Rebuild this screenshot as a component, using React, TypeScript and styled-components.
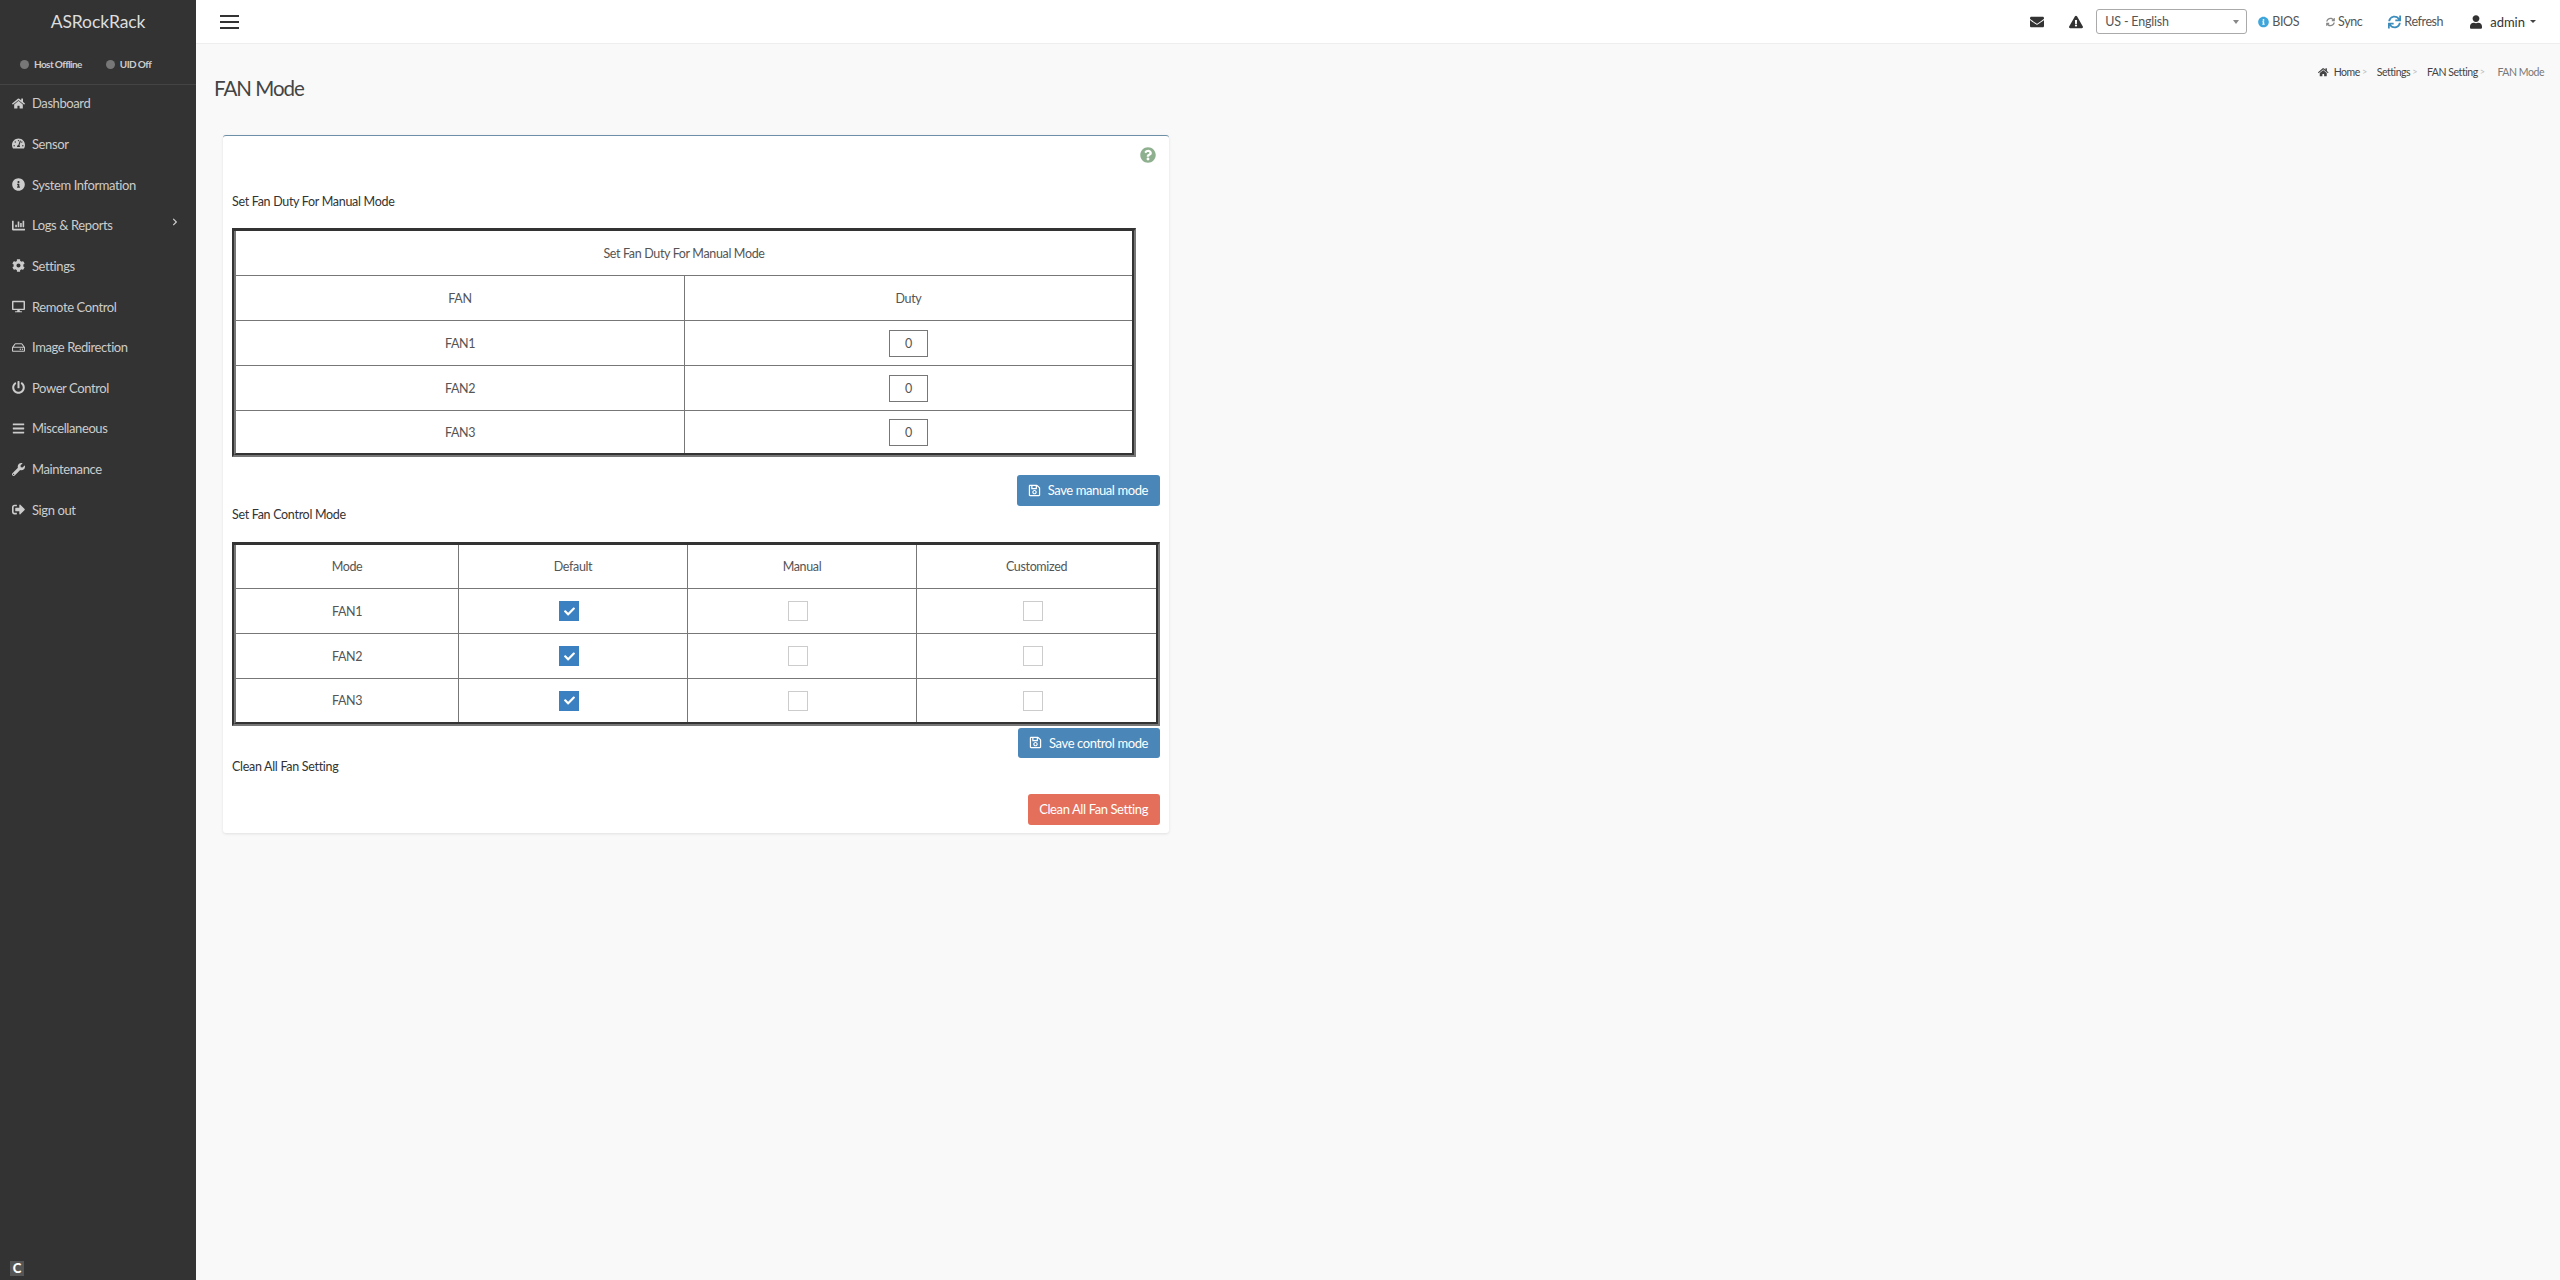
import React from "react";
import styled, { createGlobalStyle } from "styled-components";
import {
  FaHome, FaTachometerAlt, FaInfoCircle, FaChartBar, FaCog, FaDesktop, FaRegHdd, FaPowerOff,
  FaBars, FaWrench, FaSignOutAlt, FaChevronRight, FaEnvelope, FaExclamationTriangle, FaSyncAlt,
  FaSync, FaUser, FaQuestionCircle, FaRegSave, FaCheck,
} from "react-icons/fa";

const Global = createGlobalStyle`
  html, body { margin: 0; padding: 0; background: #f9f9f9; }
  body { font-family: "Lato", "Liberation Sans", sans-serif; font-size: 13px; color: #444; overflow: hidden; }
  * { box-sizing: border-box; }
`;

const Shell = styled.div`
  display: flex;
  width: 2560px;
  height: 1280px;
`;

const Sidebar = styled.aside`
  display: flex;
  flex-direction: column;
  width: 196px;
  flex: none;
  background: #333;
  color: #ccc;
`;

const Logo = styled.div`
  height: 44px;
  line-height: 44px;
  text-align: center;
  font-size: 17.5px;
  letter-spacing: -0.1px;
  color: #ddd;
`;

const StatusRow = styled.div`
  display: flex;
  align-items: center;
  height: 41px;
  padding: 0 0 0 20px;
  border-bottom: 1px solid #444;
  font-size: 10px;
  font-weight: 700;
  letter-spacing: -0.6px;
`;

const Status = styled.div<{ $gap: number }>`
  display: flex;
  align-items: center;
  gap: 5px;
  margin-right: ${(p) => p.$gap}px;
`;

const Dot = styled.span`
  width: 9px;
  height: 9px;
  border-radius: 50%;
  background: #777;
`;

const Nav = styled.nav`
  display: flex;
  flex-direction: column;
`;

const NavItem = styled.a`
  display: flex;
  align-items: center;
  height: 40.65px;
  padding: 0 0 4px 11px;
  font-size: 13px;
  letter-spacing: -0.4px;
  color: #ccc;
  position: relative;
`;

const NavIcon = styled.span`
  display: flex;
  justify-content: center;
  width: 14px;
  margin-right: 7px;
  font-size: 13px;
`;

const Chevron = styled.span`
  position: absolute;
  left: 171px;
  top: 11px;
  font-size: 8px;
`;

const Copy = styled.div`
  margin: auto 0 4px 10px;
  width: 14px;
  height: 15px;
  background: #555;
  color: #fff;
  font-size: 13px;
  font-weight: 900;
  line-height: 15px;
  text-align: center;
`;

const Main = styled.main`
  flex: 1;
  display: flex;
  flex-direction: column;
`;

const Topbar = styled.header`
  display: flex;
  align-items: center;
  height: 44px;
  padding-left: 24px;
  background: #fff;
  border-bottom: 1px solid #eee;
`;

const Burger = styled.div`
  display: flex;
  flex-direction: column;
  gap: 4px;
  width: 19px;
  margin-right: auto;
  span { display: block; height: 2px; background: #333; }
`;

const TopIcon = styled.span<{ $w: number; $color?: string; $ml?: number }>`
  display: flex;
  justify-content: center;
  width: ${(p) => p.$w}px;
  margin-left: ${(p) => p.$ml || 0}px;
  color: ${(p) => p.$color || "#333"};
  font-size: 14px;
`;

const TopLink = styled.a<{ $ml: number }>`
  display: flex;
  align-items: center;
  gap: 3px;
  margin-left: ${(p) => p.$ml}px;
  color: #555;
  font-size: 12.5px;
  letter-spacing: -0.4px;
`;

const LangBox = styled.div`
  position: relative;
  width: 151px;
  height: 25px;
  margin-left: 13px;
`;

const LangSelect = styled.select`
  appearance: none;
  width: 100%;
  height: 100%;
  padding: 0 0 0 8px;
  background: #fff;
  border: 1px solid #aaa;
  border-radius: 3px;
  font: 12.5px "Lato", sans-serif;
  letter-spacing: -0.2px;
  color: #555;
`;

const Caret = styled.span`
  position: absolute;
  right: 8px;
  top: 11px;
  border-top: 4px solid #888;
  border-left: 3px solid transparent;
  border-right: 3px solid transparent;
`;

const UserCaret = styled.span`
  margin-left: -3px;
  border-top: 3px solid #444;
  border-left: 3px solid transparent;
  border-right: 3px solid transparent;
`;

const Admin = styled(TopLink)`
  margin-right: 24px;
  gap: 8px;
  color: #333;
  font-size: 13px;
  letter-spacing: 0;
`;

const Header = styled.div`
  display: flex;
  justify-content: space-between;
  align-items: flex-start;
  height: 91px;
  padding: 0 16px 0 18px;
`;

const Title = styled.h1`
  margin: 30px 0 0;
  font-size: 20.5px;
  line-height: 28px;
  font-weight: 400;
  letter-spacing: -1px;
  color: #444;
`;

const Crumbs = styled.ol`
  display: flex;
  align-items: center;
  margin: 20px 0 0;
  padding: 0;
  list-style: none;
  font-size: 10.5px;
  letter-spacing: -0.45px;
  line-height: 16px;
  color: #444;
`;

const Crumb = styled.li<{ $dim?: boolean }>`
  display: flex;
  align-items: center;
  gap: 5px;
  color: ${(p) => (p.$dim ? "#777" : "#444")};
  &:not(:first-child)::before {
    content: ">";
    margin: 0 ${(p) => (p.$dim ? 8 : 5)}px 0 2px;
    color: #bbb;
    font-size: 9px;
  }
`;

const Card = styled.section`
  width: 946px;
  height: 698px;
  margin-left: 27px;
  padding: 11px 9px 8px;
  background: #fff;
  border-top: 1px solid #6d8fa8;
  border-radius: 3px;
  box-shadow: 0 1px 3px rgba(0, 0, 0, 0.1);
`;

const HelpRow = styled.div`
  display: flex;
  justify-content: flex-end;
  height: 16px;
  padding-right: 4px;
  color: #8fb08f;
  font-size: 16px;
`;

const Label = styled.div<{ $mt?: number; $mb?: number }>`
  margin: ${(p) => p.$mt || 0}px 0 ${(p) => p.$mb ?? 18}px;
  line-height: 18px;
  font-size: 12.5px;
  letter-spacing: -0.3px;
  color: #333;
`;

const Frame = styled.div<{ $w: number }>`
  width: ${(p) => p.$w}px;
  border-style: solid;
  border-width: 3px 2px 2px 2px;
  border-color: #333 #777 #777 #333;
`;

const Grid = styled.table`
  width: 100%;
  table-layout: fixed;
  border-collapse: separate;
  border-spacing: 0;
  border-left: 2px solid #777;
  border-right: 2px solid #333;
  border-bottom: 2px solid #333;
  background: #fff;
`;

const Row = styled.tr<{ $h: number }>`
  height: ${(p) => p.$h}px;
`;

const Cell = styled.td`
  padding: 0;
  text-align: center;
  vertical-align: middle;
  border-bottom: 1px solid #777;
  border-right: 1px solid #777;
  color: #555;
  font-size: 12.5px;
  letter-spacing: -0.35px;
  tr:last-child > & { border-bottom: 0; }
  &:last-child { border-right: 0; }
`;

const Duty = styled.input`
  display: block;
  width: 39px;
  height: 27px;
  margin: 0 auto;
  border: 1px solid #777;
  text-align: center;
  font: 12.5px "Lato", sans-serif;
  color: #555;
  background: #fff;
  padding: 0;
`;

const Check = styled.span<{ $on?: boolean }>`
  display: inline-flex;
  align-items: center;
  justify-content: center;
  vertical-align: middle;
  width: 20px;
  height: 20px;
  margin-right: 8px;
  background: ${(p) => (p.$on ? "#3b80c0" : "#fff")};
  border: ${(p) => (p.$on ? "0" : "1px solid #ccc")};
  color: #fff;
  font-size: 11px;
`;

const Actions = styled.div<{ $mt: number }>`
  display: flex;
  justify-content: flex-end;
  margin-top: ${(p) => p.$mt}px;
`;

const Button = styled.button<{ $danger?: boolean; $h: number }>`
  display: flex;
  align-items: center;
  gap: 7px;
  height: ${(p) => p.$h}px;
  padding: 0 12px 1px 11px;
  border: 0;
  border-radius: 3px;
  background: ${(p) => (p.$danger ? "#e46f5a" : "#4a86b8")};
  color: #fff;
  font: 13px "Lato", sans-serif;
  letter-spacing: -0.4px;
`;

const navItems: [string, React.ReactNode][] = [
  ["Dashboard", <FaHome />],
  ["Sensor", <FaTachometerAlt />],
  ["System Information", <FaInfoCircle />],
  ["Logs & Reports", <FaChartBar />],
  ["Settings", <FaCog />],
  ["Remote Control", <FaDesktop />],
  ["Image Redirection", <FaRegHdd />],
  ["Power Control", <FaPowerOff />],
  ["Miscellaneous", <FaBars />],
  ["Maintenance", <FaWrench />],
  ["Sign out", <FaSignOutAlt />],
];

const fans = ["FAN1", "FAN2", "FAN3"];

export default function App() {
  return (
    <Shell>
      <Global />
      <Sidebar>
        <Logo>ASRockRack</Logo>
        <StatusRow>
          <Status $gap={24}><Dot />Host Offline</Status>
          <Status $gap={0}><Dot />UID Off</Status>
        </StatusRow>
        <Nav>
          {navItems.map(([label, icon]) => (
            <NavItem key={label}>
              <NavIcon>{icon}</NavIcon>
              {label}
              {label === "Logs & Reports" && <Chevron><FaChevronRight /></Chevron>}
            </NavItem>
          ))}
        </Nav>
        <Copy>C</Copy>
      </Sidebar>
      <Main>
        <Topbar>
          <Burger><span /><span /><span /></Burger>
          <TopIcon $w={15}><FaEnvelope /></TopIcon>
          <TopIcon $w={14} $ml={25}><FaExclamationTriangle /></TopIcon>
          <LangBox>
            <LangSelect defaultValue="en"><option value="en">US - English</option></LangSelect>
            <Caret />
          </LangBox>
          <TopLink $ml={11}><TopIcon $w={11} $color="#3fa6dc"><FaInfoCircle /></TopIcon>BIOS</TopLink>
          <TopLink $ml={27}><TopIcon $w={9} $color="#888"><FaSyncAlt /></TopIcon>Sync</TopLink>
          <TopLink $ml={26}><TopIcon $w={13} $color="#3c8dbc"><FaSync /></TopIcon>Refresh</TopLink>
          <Admin $ml={27}><TopIcon $w={12}><FaUser /></TopIcon>admin<UserCaret /></Admin>
        </Topbar>
        <Header>
          <Title>FAN Mode</Title>
          <Crumbs>
            <Crumb><FaHome />Home</Crumb>
            <Crumb>Settings</Crumb>
            <Crumb>FAN Setting</Crumb>
            <Crumb $dim>FAN Mode</Crumb>
          </Crumbs>
        </Header>
        <Card>
          <HelpRow><FaQuestionCircle /></HelpRow>
          <Label $mt={30} $mb={17}>Set Fan Duty For Manual Mode</Label>
          <Frame $w={904}>
            <Grid>
              <colgroup><col width={449} /><col width={447} /></colgroup>
              <tbody>
                <Row $h={45}><Cell colSpan={2}>Set Fan Duty For Manual Mode</Cell></Row>
                <Row $h={45}><Cell>FAN</Cell><Cell>Duty</Cell></Row>
                {fans.map((f, i) => (
                  <Row key={f} $h={i === 2 ? 42 : 45}>
                    <Cell>{f}</Cell>
                    <Cell><Duty readOnly value="0" /></Cell>
                  </Row>
                ))}
              </tbody>
            </Grid>
          </Frame>
          <Actions $mt={18}>
            <Button $h={31}><FaRegSave />Save manual mode</Button>
          </Actions>
          <Label>Set Fan Control Mode</Label>
          <Frame $w={928}>
            <Grid>
              <colgroup><col width={223} /><col width={229} /><col width={229} /><col width={239} /></colgroup>
              <tbody>
                <Row $h={44}><Cell>Mode</Cell><Cell>Default</Cell><Cell>Manual</Cell><Cell>Customized</Cell></Row>
                {fans.map((f, i) => (
                  <Row key={f} $h={i === 2 ? 43 : 45}>
                    <Cell>{f}</Cell>
                    <Cell><Check $on><FaCheck /></Check></Cell>
                    <Cell><Check /></Cell>
                    <Cell><Check /></Cell>
                  </Row>
                ))}
              </tbody>
            </Grid>
          </Frame>
          <Actions $mt={2}>
            <Button $h={30}><FaRegSave />Save control mode</Button>
          </Actions>
          <Label>Clean All Fan Setting</Label>
          <Actions $mt={0}>
            <Button $danger $h={31}>Clean All Fan Setting</Button>
          </Actions>
        </Card>
      </Main>
    </Shell>
  );
}
